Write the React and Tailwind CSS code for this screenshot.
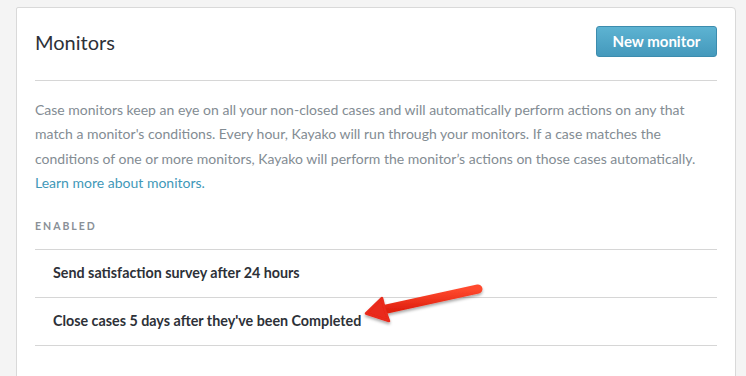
import React from "react";

const monitors = [
  "Send satisfaction survey after 24 hours",
  "Close cases 5 days after they've been Completed",
];

const Arrow = () => (
  <svg
    className="absolute left-0 top-0 pointer-events-none"
    width="746"
    height="376"
    viewBox="0 0 746 376"
  >
    <defs>
      <linearGradient id="arrowFill" x1="0" y1="0" x2="0" y2="1">
        <stop offset="0" stopColor="#ff4a2e" />
        <stop offset="1" stopColor="#e0210f" />
      </linearGradient>
      <filter id="arrowShadow" x="-20%" y="-50%" width="140%" height="200%">
        <feDropShadow dx="0" dy="2" stdDeviation="1.6" floodColor="#000" floodOpacity="0.35" />
      </filter>
    </defs>
    <g filter="url(#arrowShadow)">
      <line
        x1="478"
        y1="289"
        x2="382"
        y2="310"
        stroke="url(#arrowFill)"
        strokeWidth="9"
        strokeLinecap="round"
      />
      <path
        d="M366 313.5 L382 298 Q384 309 389 321 Z"
        fill="#e9291a"
        stroke="#e9291a"
        strokeWidth="2.5"
        strokeLinejoin="round"
      />
    </g>
  </svg>
);

export default function App() {
  return (
    <div
      className="relative h-[376px] w-[746px] overflow-hidden bg-[#f4f4f4] pl-[16px] pt-[7px]"
      style={{ fontFamily: "Lato, 'Open Sans', sans-serif" }}
    >
      <div className="h-[400px] w-[720px] rounded-tr-[4px] rounded-tl-[2px] border border-[#d9d9d9] bg-white px-[18px] pt-[18px]">
        <div className="flex h-[31px] items-center justify-between">
          <h1 className="text-[20px] leading-none text-[#2d3138]">Monitors</h1>
          <button className="h-[31px] w-[121px] rounded-[3px] border border-[#3c8cae] bg-gradient-to-b from-[#5db3d2] to-[#4499bc] text-[15px] font-bold text-white">
            New monitor
          </button>
        </div>
        <div className="mt-[23px] border-t border-[#d6d6d6]" />

        <p className="mt-[17px] text-[14px] leading-[24.4px] text-[#838c93]">
          Case monitors keep an eye on all your non-closed cases and will automatically perform actions on any that
          match a monitor's conditions. Every hour, Kayako will run through your monitors. If a case matches the
          conditions of one or more monitors, Kayako will perform the monitor’s actions on those cases automatically.{" "}
          <a href="#" className="text-[#3f98b8]">
            Learn more about monitors.
          </a>
        </p>

        <div className="mt-[23px] text-[10.5px] font-bold uppercase leading-[14px] tracking-[2px] text-[#8a9097]">
          Enabled
        </div>

        <ul className="mt-[16px] border-t border-[#d6d6d6]">
          {monitors.map((m) => (
            <li
              key={m}
              className="flex h-[48px] items-center border-b border-[#d6d6d6] pl-[18px] text-[14.3px] font-bold text-[#2d3138]"
            >
              {m}
            </li>
          ))}
        </ul>
      </div>
      <Arrow />
    </div>
  );
}
